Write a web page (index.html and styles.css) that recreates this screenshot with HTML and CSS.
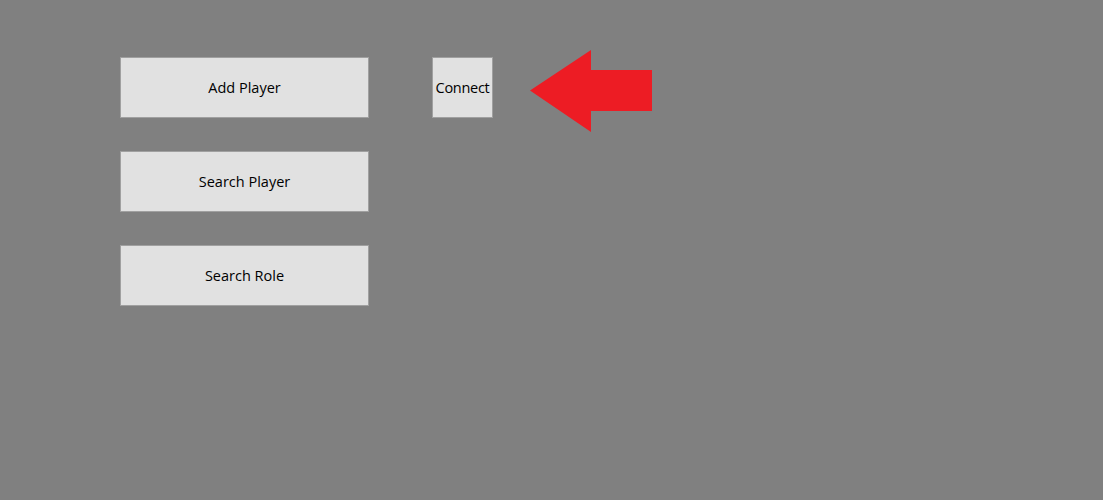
FILE: index.html
```html
<!DOCTYPE html>
<html>
<head>
<meta charset="utf-8">
<link rel="stylesheet" href="styles.css">
</head>
<body>
<div class="page">
  <div class="col">
    <button class="btn wide">Add Player</button>
    <button class="btn wide">Search Player</button>
    <button class="btn wide">Search Role</button>
  </div>
  <button class="btn square">Connect</button>
  <svg class="arrow" width="122" height="82" viewBox="0 0 122 82">
    <polygon points="0,40.5 61,0 61,20 122,20 122,61 61,61 61,82" fill="#ed1c24"/>
  </svg>
</div>
</body>
</html>
```
FILE: styles.css
```css
html, body {
  margin: 0;
  padding: 0;
  background: #808080;
  width: 1103px;
  height: 500px;
  overflow: hidden;
}
.page {
  display: flex;
  align-items: flex-start;
  padding: 57px 0 0 120px;
}
.col {
  display: flex;
  flex-direction: column;
  gap: 33px;
}
.btn {
  box-sizing: border-box;
  height: 61px;
  margin: 0;
  padding: 2px 0 0 0;
  background: #e1e1e1;
  border: 1px solid #a0a0a0;
  border-radius: 0;
  color: #000;
  font-family: "Open Sans", "Noto Sans", sans-serif;
  font-size: 14.5px;
  line-height: 1;
}
.wide {
  width: 249px;
}
.square {
  width: 61px;
  margin-left: 63px;
  letter-spacing: -0.3px;
  white-space: nowrap;
}
.arrow {
  display: block;
  margin-left: 37px;
  margin-top: -7px;
}
```
